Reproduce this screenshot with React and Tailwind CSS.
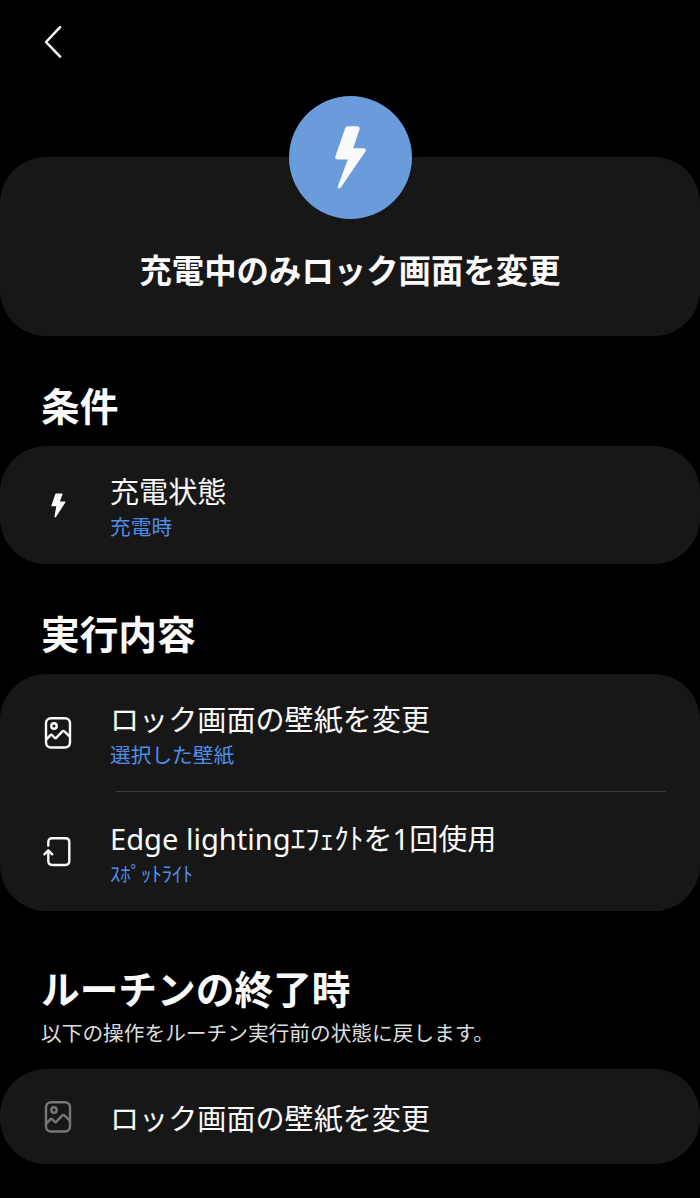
import clsx from 'clsx';

// Lightning bolt for the badge
function BoltIcon() {
  return (
    <svg viewBox="0 0 31 63" fill="currentColor" className="w-[31px] h-[63px]">
      <path d="M13 0.3H22Q25.4 0.3 24.5 3.2L18.2 22.3H28.4Q32.2 22.3 30.2 25.8L5.8 61.4Q4.8 62.8 3.4 62.2Q2.4 61.6 2.9 60.2L12.8 33.5H2.6Q-0.6 33.5 0.4 30.2L10.1 2.5Q10.9 0.3 13 0.3Z" />
    </svg>
  );
}

// Wider, sharper bolt for the charging row
function ChargeIcon() {
  return (
    <svg viewBox="0 0 15 25" fill="currentColor" className="w-[15px] h-[25px]">
      <path d="M5.2 0.4H11Q11.8 0.4 11.5 1.2L8.9 8.6H13.9Q14.9 8.6 14.3 9.6L5.1 23.8Q4.6 24.6 3.9 24.3Q3.3 24 3.5 23.2L5.3 13.2H1.1Q0.2 13.2 0.5 12.3L4.3 1.1Q4.5 0.4 5.2 0.4Z" />
    </svg>
  );
}

function WallpaperIcon() {
  return (
    <svg viewBox="0 0 28 34" className="w-[28px] h-[34px]" fill="none" stroke="currentColor" strokeWidth="2.4" strokeLinejoin="round">
      <rect x="2" y="2.2" width="24" height="29.3" rx="5" />
      <circle cx="10" cy="10" r="2.7" />
      <path d="M2.2 23.6L6.5 19.2Q7.3 18.4 8.1 19.2L10.8 21.8Q11.6 22.6 12.4 21.7L18.4 15.4Q19.4 14.4 20.4 15.4L26 20.8" />
    </svg>
  );
}

function EdgeIcon() {
  return (
    <svg viewBox="0 0 30 32" className="w-[30px] h-[32px]" fill="none" stroke="currentColor" strokeWidth="2.4" strokeLinecap="round" strokeLinejoin="round">
      <path d="M5.3 9.5V6.2Q5.3 2.3 9.2 2.3H22.4Q26.3 2.3 26.3 6.2V25.1Q26.3 29 22.4 29H9.2Q5.3 29 5.3 25.1V15.5" />
      <path d="M1.4 18.3L5.3 14.4L9.2 18.3" />
    </svg>
  );
}

function SectionTitle({ children }) {
  return <h2 className="pl-[41px] text-[38.7px] leading-[48px] font-bold">{children}</h2>;
}

function Card({ children }) {
  return <div className="bg-[#171717] rounded-[46px]">{children}</div>;
}

function Row({ icon, title, detail, dimmed }) {
  return (
    <div className={clsx('flex items-center', detail ? 'h-[118px]' : 'h-[95px]')}>
      <div className={clsx('w-[110px] pl-[6px] flex shrink-0 justify-center', dimmed && 'text-[#777]')}>
        {icon}
      </div>
      <div className={clsx('whitespace-nowrap', detail ? 'pt-[8px]' : 'pt-[5px]')}>
        <p className="text-[29.1px] leading-[35px]">{title}</p>
        {detail && <p className="text-[20.7px] leading-[34px] text-[#4f8fe8]">{detail}</p>}
      </div>
    </div>
  );
}

export default function App() {
  return (
    <main
      lang="ja"
      className="w-[700px] h-[1198px] overflow-hidden bg-black text-[#fafafa] font-['Noto_Sans','Noto_Sans_CJK_JP',sans-serif]"
    >
      <header className="h-[157px] pt-[25px] pl-[43px]">
        <button type="button" aria-label="戻る" className="block">
          <svg viewBox="0 0 20 34" className="w-[20px] h-[34px]" fill="none" stroke="currentColor" strokeWidth="2.5" strokeLinecap="round" strokeLinejoin="round">
            <path d="M17.1 2.2L3 17L17.1 31.6" />
          </svg>
        </button>
      </header>

      <div className="relative h-[179px] bg-[#171717] rounded-[46px] pt-[92px]">
        {/* Badge sits half over the top edge of the card */}
        <div className="absolute left-[289px] top-[-61px] w-[123px] h-[123px] rounded-full bg-[#6a9bdb] flex items-center justify-center">
          <BoltIcon />
        </div>
        <h1 className="text-center text-[32.4px] leading-[43px] font-bold">充電中のみロック画面を変更</h1>
      </div>

      <section className="pt-[46px]">
        <SectionTitle>条件</SectionTitle>
        <div className="pt-[16px]">
          <Card>
            <Row icon={<ChargeIcon />} title="充電状態" detail="充電時" />
          </Card>
        </div>
      </section>

      <section className="pt-[46px]">
        <SectionTitle>実行内容</SectionTitle>
        <div className="pt-[16px]">
          <Card>
            <Row icon={<WallpaperIcon />} title="ロック画面の壁紙を変更" detail="選択した壁紙" />
            <div className="h-px -mt-px mb-px ml-[116px] mr-[34px] bg-[#3c3c3c]" />
            <Row icon={<EdgeIcon />} title="Edge lightingｴﾌｪｸﾄを1回使用" detail="ｽﾎﾟｯﾄﾗｲﾄ" />
          </Card>
        </div>
      </section>

      <section className="pt-[54px]">
        <SectionTitle>ルーチンの終了時</SectionTitle>
        <p className="pt-[5px] pl-[41px] text-[20.7px] leading-[30px] text-[#dedede]">以下の操作をルーチン実行前の状態に戻します。</p>
        <div className="pt-[21px]">
          <Card>
            <Row icon={<WallpaperIcon />} title="ロック画面の壁紙を変更" dimmed />
          </Card>
        </div>
      </section>
    </main>
  );
}
